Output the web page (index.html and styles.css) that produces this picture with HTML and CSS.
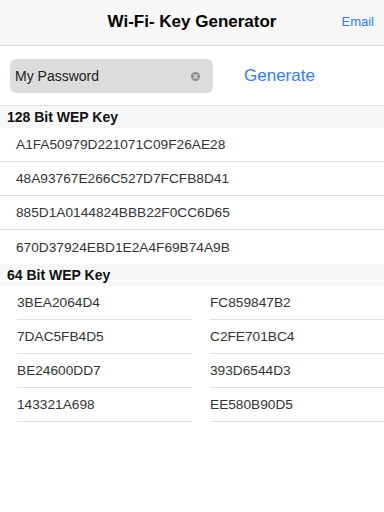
FILE: index.html
```html
<!DOCTYPE html>
<html>
<head>
<meta charset="utf-8">
<link rel="stylesheet" href="styles.css">
</head>
<body>
<div class="nav">
  <div></div>
  <div class="title">Wi-Fi- Key Generator</div>
  <div class="email">Email</div>
</div>
<div class="searchbar">
  <div class="field">
    <span class="field-text">My Password</span>
    <svg class="clear" width="9" height="9" viewBox="0 0 9 9"><circle cx="4.5" cy="4.5" r="4.5" fill="#8e8e93"/><path d="M2.8 2.8 L6.2 6.2 M6.2 2.8 L2.8 6.2" stroke="#dcdcdc" stroke-width="1.3" stroke-linecap="round"/></svg>
  </div>
  <div class="generate">Generate</div>
</div>
<div class="section-header">128 Bit WEP Key</div>
<div class="list">
  <div class="row">A1FA50979D221071C09F26AE28</div>
  <div class="row">48A93767E266C527D7FCFB8D41</div>
  <div class="row">885D1A0144824BBB22F0CC6D65</div>
  <div class="row">670D37924EBD1E2A4F69B74A9B</div>
</div>
<div class="section-header">64 Bit WEP Key</div>
<div class="grid">
  <div class="cell left">3BEA2064D4</div>
  <div class="cell right">FC859847B2</div>
  <div class="cell left">7DAC5FB4D5</div>
  <div class="cell right">C2FE701BC4</div>
  <div class="cell left">BE24600DD7</div>
  <div class="cell right">393D6544D3</div>
  <div class="cell left">143321A698</div>
  <div class="cell right">EE580B90D5</div>
</div>
</body>
</html>
```
FILE: styles.css
```css
* { box-sizing: border-box; }
body {
  margin: 0;
  width: 384px;
  height: 512px;
  background: #ffffff;
  font-family: "Liberation Sans", Helvetica, Arial, sans-serif;
  color: #1a1a1a;
}
.nav {
  height: 46px;
  background: #f7f7f7;
  border-bottom: 1px solid #d9d9d9;
  display: grid;
  grid-template-columns: 1fr auto 1fr;
  align-items: center;
}
.title {
  font-weight: bold;
  font-size: 17px;
  color: #000;
  padding-bottom: 1px;
}
.email {
  justify-self: end;
  padding-right: 10px;
  font-size: 13px;
  color: #2d7cf6;
  padding-bottom: 3px;
}
.searchbar {
  height: 60px;
  border-bottom: 1px solid #e0e0e0;
  display: flex;
  align-items: center;
  padding-left: 10px;
  padding-top: 1px;
}
.field {
  width: 203px;
  height: 34px;
  background: #dcdcdc;
  border-radius: 6px;
  display: flex;
  align-items: center;
  padding-left: 5px;
  padding-right: 13px;
}
.field-text {
  flex: 1;
  font-size: 14px;
  color: #222;
}
.clear { display: block; }
.generate {
  margin-left: 31px;
  font-size: 17px;
  color: #2d7cf6;
}
.section-header {
  height: 22px;
  background: #f7f7f7;
  font-weight: bold;
  font-size: 14px;
  color: #111;
  padding-left: 7px;
  display: flex;
  align-items: center;
}
.row {
  height: 34px;
  border-bottom: 1px solid #e0e0e0;
  display: flex;
  align-items: center;
  padding-left: 16px;
  font-size: 13.7px;
  color: #333;
}
.list .row:last-child { border-bottom: none; }
.grid {
  display: grid;
  grid-template-columns: 174px 174px;
  column-gap: 18px;
  padding-left: 18px;
}
.cell {
  height: 34px;
  border-bottom: 1px solid #e0e0e0;
  display: flex;
  align-items: center;
  font-size: 13.7px;
  color: #333;
}
.cell.left { margin-left: -1px; }
```
